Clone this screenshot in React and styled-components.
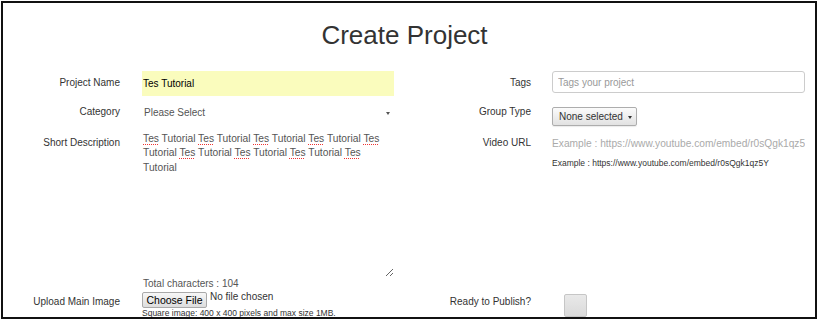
import React from 'react';
import styled, { createGlobalStyle } from 'styled-components';

const GlobalStyle = createGlobalStyle`
  html, body {
    margin: 0;
    padding: 0;
    background: #fff;
  }
  body {
    font-family: "Liberation Sans", Arial, sans-serif;
  }
`;

const Frame = styled.div`
  box-sizing: border-box;
  width: 816px;
  height: 318px;
  margin: 1px 0 0 1px;
  padding-top: 17px;
  border: 2px solid #111;
  overflow: hidden;
  background: #fff;
`;

const Title = styled.h1`
  margin: 0 0 21px;
  padding-right: 9px;
  font-size: 26px;
  line-height: 30px;
  font-weight: 400;
  color: #333;
  text-align: center;
`;

const Row = styled.div`
  display: grid;
  grid-template-columns: 139px 252px 158px 253px;
  align-items: start;
  margin-top: ${p => p.$top || 0}px;
`;

const Label = styled.label`
  box-sizing: border-box;
  padding-top: ${p => p.$offset ?? 5}px;
  padding-right: ${p => p.$pad}px;
  text-align: right;
  font-size: 10px;
  line-height: 14px;
  color: #333;
  white-space: nowrap;
`;

const Field = styled.div`
  display: flex;
  flex-direction: column;
  align-items: flex-start;
  min-width: 0;
`;

const NameInput = styled.input`
  box-sizing: border-box;
  width: 100%;
  height: 25px;
  margin: 0;
  padding: 0 1px;
  border: none;
  outline: none;
  background: #fafcbd;
  font: 10px "Liberation Sans", Arial, sans-serif;
  color: #000;
`;

const TagsInput = styled.input`
  box-sizing: border-box;
  width: 100%;
  height: 22px;
  margin: 0;
  padding: 0 5px;
  border: 1px solid #ccc;
  border-radius: 3px;
  outline: none;
  font: 10px "Liberation Sans", Arial, sans-serif;
  color: #555;
  &::placeholder { color: #999; }
`;

const PlainInput = styled.input`
  box-sizing: border-box;
  width: 100%;
  height: 25px;
  margin: 0;
  padding: 0;
  border: none;
  outline: none;
  background: transparent;
  font: 10.2px "Liberation Sans", Arial, sans-serif;
  color: #555;
  &::placeholder { color: #aaa; }
`;

const SelectBox = styled.div`
  box-sizing: border-box;
  display: flex;
  align-items: center;
  justify-content: space-between;
  width: 100%;
  height: 24px;
  padding: 0 4px 0 2px;
  font-size: 10px;
  color: #555;
`;

const Arrow = styled.span`
  width: 0;
  height: 0;
  margin-top: 2px;
  border-left: ${p => p.$size}px solid transparent;
  border-right: ${p => p.$size}px solid transparent;
  border-top: ${p => p.$size + 1}px solid ${p => p.$color};
`;

const DropButton = styled.div`
  box-sizing: border-box;
  display: flex;
  align-items: center;
  gap: 5px;
  width: 85px;
  height: 19px;
  margin-top: 7px;
  padding: 0 5px 0 6px;
  border: 1px solid #adadad;
  border-radius: 2px;
  background: linear-gradient(#fbfbfb, #e2e2e2);
  box-shadow: 0 1px 1px rgba(0, 0, 0, 0.08);
  font-size: 10px;
  color: #333;
  white-space: nowrap;
`;

const TextArea = styled.div`
  box-sizing: border-box;
  width: 100%;
  height: 146px;
  padding: 1px 1px;
  font-size: 10.25px;
  line-height: 14.3px;
  color: #555;
  overflow: auto;
  resize: vertical;
`;

const Misspelt = styled.span`
  text-decoration: underline dotted #e33;
  text-decoration-thickness: 1px;
  text-decoration-skip-ink: none;
  text-underline-offset: 2px;
`;

const Count = styled.div`
  padding-left: 1px;
  font-size: 10px;
  line-height: 14px;
  color: #555;
`;

const FileRow = styled.div`
  display: flex;
  align-items: flex-start;
  gap: 3px;
`;

const FileButton = styled.button`
  box-sizing: border-box;
  width: 65px;
  height: 16px;
  margin: 0;
  padding: 0;
  border: 1px solid #a9a9a9;
  border-radius: 2px;
  background: linear-gradient(#f7f7f7, #dddddd);
  font: 10.5px "Liberation Sans", Arial, sans-serif;
  color: #000;
`;

const FileText = styled.span`
  font-size: 10px;
  line-height: 10px;
  color: #333;
`;

const Hint = styled.div`
  margin-top: ${p => p.$top || 0}px;
  font-size: 8.5px;
  line-height: 11px;
  color: #333;
  white-space: nowrap;
`;

const CheckBox = styled.span`
  box-sizing: border-box;
  display: block;
  width: 23px;
  height: 23px;
  margin: 2px 0 0 12px;
  border: 1px solid #c6c6c6;
  border-radius: 2px;
  background: linear-gradient(#e9e9e9, #dadada);
`;

const words = Array.from({ length: 9 }, (_, i) => (
  <React.Fragment key={i}>
    <Misspelt>Tes</Misspelt> Tutorial{i < 8 ? ' ' : ''}
  </React.Fragment>
));

export default function App() {
  return (
    <>
      <GlobalStyle />
      <Frame>
        <Title>Create Project</Title>

        <Row>
          <Label $pad={22}>Project Name</Label>
          <Field>
            <NameInput defaultValue="Tes Tutorial" />
          </Field>
          <Label $pad={21}>Tags</Label>
          <Field>
            <TagsInput placeholder="Tags your project" />
          </Field>
        </Row>

        <Row $top={4}>
          <Label $pad={22}>Category</Label>
          <Field>
            <SelectBox>
              Please Select
              <Arrow $size={2.5} $color="#555" />
            </SelectBox>
          </Field>
          <Label $pad={21}>Group Type</Label>
          <Field>
            <DropButton>
              None selected
              <Arrow $size={2.5} $color="#333" />
            </DropButton>
          </Field>
        </Row>

        <Row $top={5}>
          <Label $pad={22}>Short Description</Label>
          <Field>
            <TextArea>{words}</TextArea>
            <Count>Total characters : 104</Count>
          </Field>
          <Label $pad={21}>Video URL</Label>
          <Field>
            <PlainInput placeholder="Example : https://www.youtube.com/embed/r0sQgk1qz5Y" />
            <Hint $top={2}>Example : https://www.youtube.com/embed/r0sQgk1qz5Y</Hint>
          </Field>
        </Row>

        <Row $top={1}>
          <Label $pad={22} $offset={3}>Upload Main Image</Label>
          <Field>
            <FileRow>
              <FileButton type="button">Choose File</FileButton>
              <FileText>No file chosen</FileText>
            </FileRow>
            <Hint>Square image: 400 x 400 pixels and max size 1MB.</Hint>
          </Field>
          <Label $pad={21} $offset={3}>Ready to Publish?</Label>
          <Field>
            <CheckBox />
          </Field>
        </Row>
      </Frame>
    </>
  );
}
